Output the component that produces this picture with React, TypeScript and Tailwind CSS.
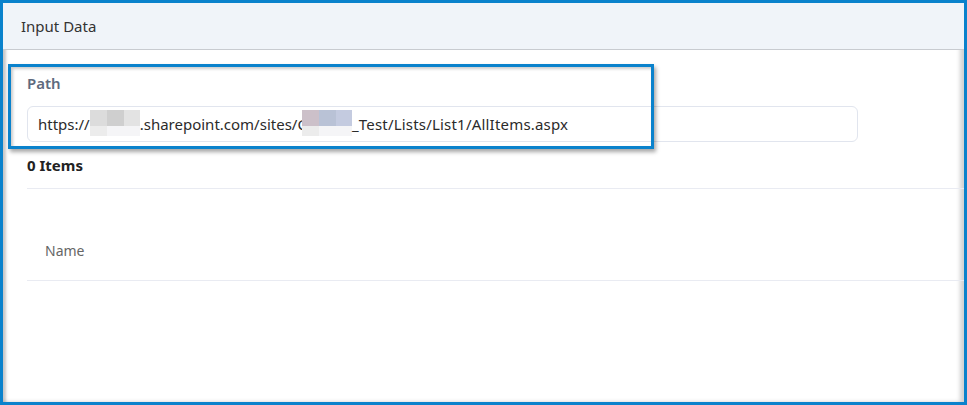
import React from 'react';

const font = { fontFamily: '"Noto Sans", "Open Sans", sans-serif' };

// smudged-out tenant name in the url
function Smudge({ tone }: { tone: 'gray' | 'tint' }) {
  const top =
    tone === 'gray'
      ? ['bg-[#dcdcdc]', 'bg-[#cfcfcf]', 'bg-[#e3e3e3]']
      : ['bg-[#ccc0c9]', 'bg-[#b9c2d6]', 'bg-[#c4cbe0]'];
  return (
    <span className="inline-flex flex-col w-[50px] h-[26px] align-middle -mt-[2px]">
      <span className="flex h-[16px]">
        <span className={`w-[17px] ${top[0]}`} />
        <span className={`w-[17px] ${top[1]}`} />
        <span className={`w-[16px] ${top[2]}`} />
      </span>
      <span className="flex h-[10px]">
        <span className="w-[17px] bg-[#ececec]" />
        <span className="w-[33px] bg-[#f5f5f7]" />
      </span>
    </span>
  );
}

function Divider() {
  return <div className="ml-[24px] h-px bg-[#e9ebf2]" />;
}

export default function App() {
  return (
    <div
      className="relative w-[967px] h-[405px] overflow-hidden border-[3px] border-[#0a82cc] bg-white"
      style={font}
    >
      <div className="h-full flex flex-col shadow-[inset_3px_2px_3px_rgba(0,0,0,0.22),inset_-4px_0_4px_rgba(0,0,0,0.18)]">
        <div className="h-[47px] shrink-0 flex items-center pl-[18px] bg-[#f0f4f9] border-b border-[#c8cbd0] text-[15px] text-[#333]">
          Input Data
        </div>

        <div className="pt-[23px]">
          <div className="pl-[24px] text-[15px] font-semibold leading-[20px] text-[#5e6a7e]">Path</div>
          <div className="ml-[24px] mt-[13px] w-[831px] h-[36px] flex items-center pl-[10px] rounded-md border border-[#e1e5ee] text-[15px] text-[#2b2b2b]">
            <span>https://</span>
            <Smudge tone="gray" />
            <span>.sharepoint.com/sites/C</span>
            <span className="-ml-[5px] flex">
              <Smudge tone="tint" />
            </span>
            <span className="tracking-[0.2px]">_Test/Lists/List1/AllItems.aspx</span>
          </div>
          <div className="pl-[24px] mt-[13px] text-[15px] font-bold leading-[20px] text-[#222]">0 Items</div>
          <div className="mt-[13px]">
            <Divider />
          </div>
          <div className="pl-[42px] pt-[52px] pb-[19px] text-[14px] leading-[20px] text-[#666]">Name</div>
          <Divider />
        </div>
      </div>

      {/* callout frame around the path field */}
      <div className="absolute left-[5px] top-[61px] w-[646px] h-[85px] border-[3px] border-[#0a82cc] shadow-[2px_3px_4px_rgba(0,0,0,0.35),inset_2px_2px_3px_rgba(0,0,0,0.2)]" />
    </div>
  );
}
